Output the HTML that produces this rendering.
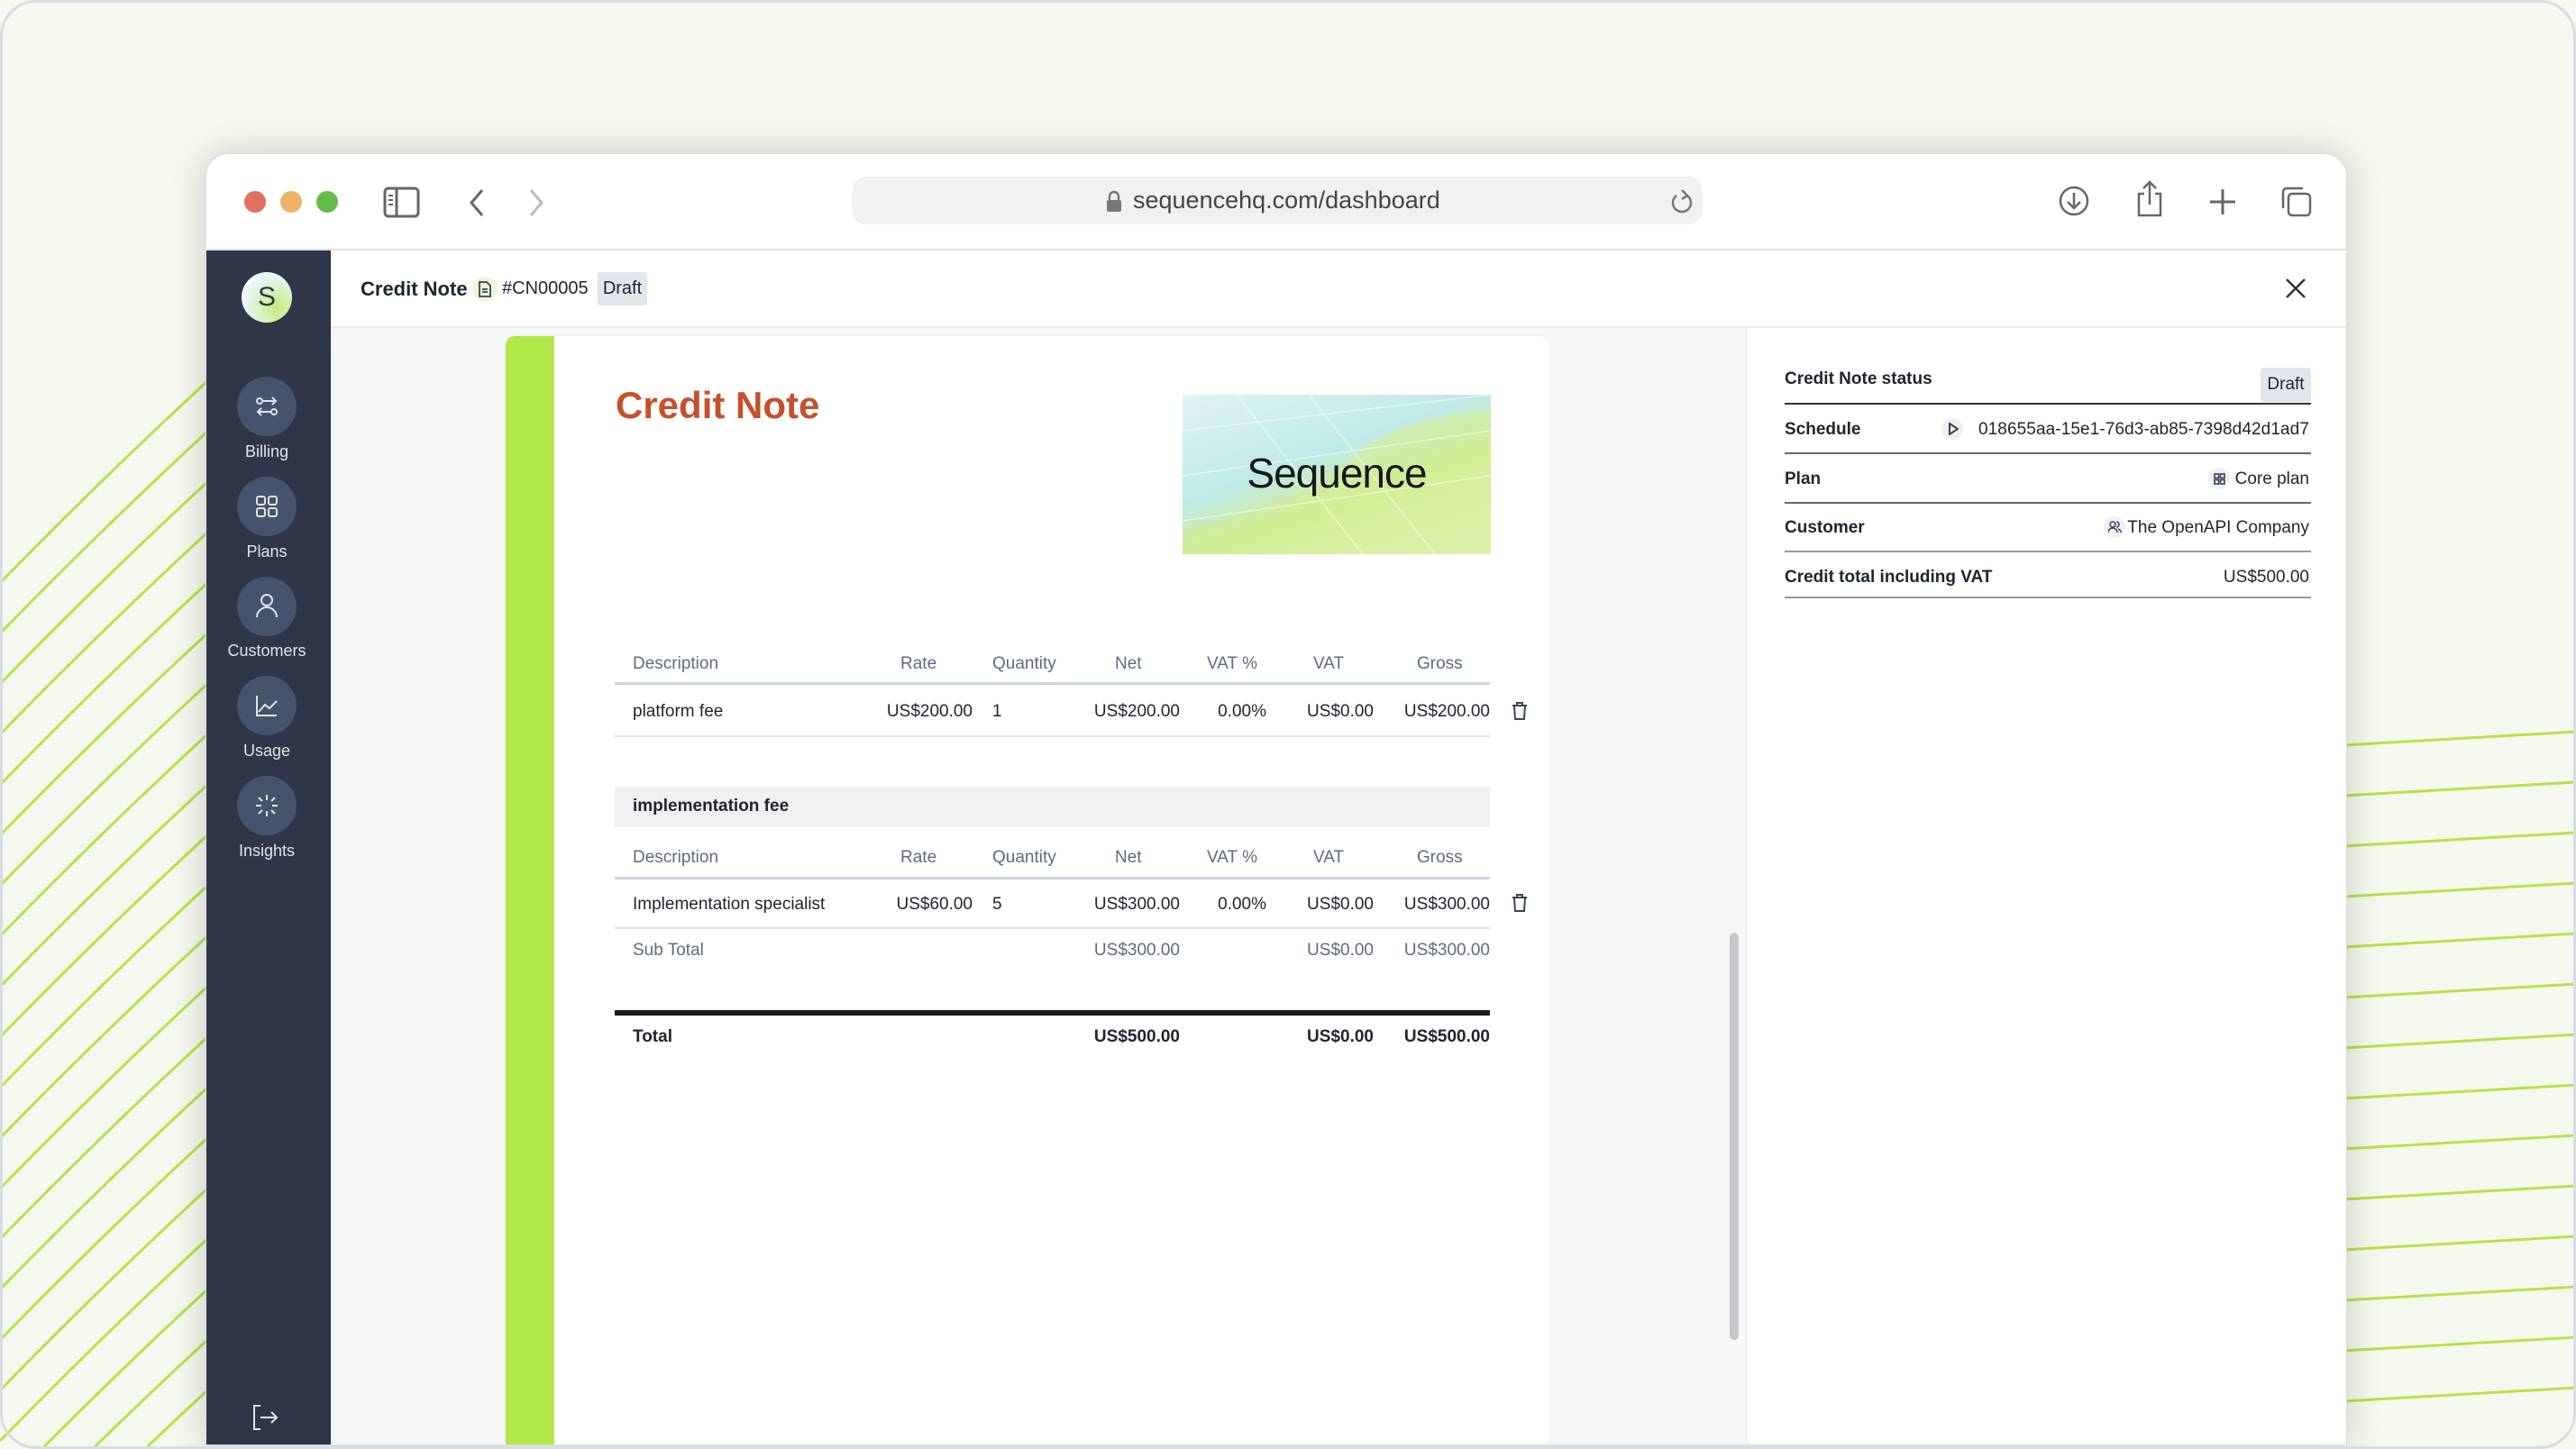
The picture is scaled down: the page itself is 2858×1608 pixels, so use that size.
<!DOCTYPE html>
<html><head><meta charset="utf-8"><style>
*{box-sizing:border-box;margin:0;padding:0}
html,body{width:2858px;height:1608px;overflow:hidden}
body{background:#f5f8ee;font-family:"Liberation Sans",sans-serif;position:relative;color:#1f2430}
.abs{position:absolute}
.frame{position:absolute;left:0;top:0;width:2858px;height:1608px;border:3px solid #d6dde4;border-radius:40px;pointer-events:none}
.win{position:absolute;left:228px;top:170px;width:2376px;height:1434px;background:#fff;border-radius:26px 26px 0 0;box-shadow:0 0 40px rgba(0,0,0,.18);overflow:hidden;border:1px solid #ddd}
.tb{position:absolute;left:0;top:0;width:100%;height:107px;background:#fff;border-bottom:2px solid #e2e2e2}
.dot{position:absolute;top:41px;width:24px;height:24px;border-radius:50%}
.side{position:absolute;left:0;top:107px;width:138px;height:1327px;background:#2e3748}
.nav{position:absolute;left:34px;width:66px;height:66px;border-radius:50%;background:#45536b}
.navl{position:absolute;left:-2px;width:138px;text-align:center;color:#dfe4ea;font-size:18px}
.hdr{position:absolute;left:138px;top:107px;right:0;height:86px;background:#fff;border-bottom:2px solid #e8ebef}
.main{position:absolute;left:138px;top:193px;width:1570px;height:1241px;background:#f5f7f9;overflow:hidden}
.card{position:absolute;left:194px;top:9px;width:1158px;height:1240px;background:#fff;border-radius:10px 10px 0 0;overflow:hidden;box-shadow:0 0 3px rgba(0,0,0,.06)}
.rp{position:absolute;left:1708px;top:193px;right:0;height:1241px;background:#fff;border-left:2px solid #eceff2}
.t{position:absolute;font-size:19px;white-space:nowrap}
.h{color:#5e6b82}
.r{text-align:right}
.rl{position:absolute;left:2px;font-size:19px;font-weight:bold;color:#1f2430}
.rline{position:absolute;left:2px;width:584px;height:2px;background:#555}
</style></head><body>
<svg class="abs" style="left:0;top:0" width="2858" height="1608">
<g fill="none" stroke="#b5e34a" stroke-width="3">
<path d="M0 647 Q114 530 230 423"/><path d="M0 703 Q114 586 230 479"/><path d="M0 759 Q114 642 230 535"/><path d="M0 815 Q114 698 230 591"/><path d="M0 871 Q114 754 230 647"/><path d="M0 927 Q114 810 230 703"/><path d="M0 983 Q114 866 230 759"/><path d="M0 1039 Q114 922 230 815"/><path d="M0 1095 Q114 978 230 871"/><path d="M0 1151 Q114 1034 230 927"/><path d="M0 1207 Q114 1090 230 983"/><path d="M0 1263 Q114 1146 230 1039"/><path d="M0 1319 Q114 1202 230 1095"/><path d="M0 1375 Q114 1258 230 1151"/><path d="M0 1431 Q114 1314 230 1207"/><path d="M0 1487 Q114 1370 230 1263"/><path d="M0 1543 Q114 1426 230 1319"/><path d="M0 1599 Q114 1482 230 1375"/><path d="M0 1655 Q114 1538 230 1431"/><path d="M0 1711 Q114 1594 230 1487"/><path d="M0 1767 Q114 1650 230 1543"/>
<path d="M2600 827 L2858 812"/><path d="M2600 883 L2858 868"/><path d="M2600 939 L2858 924"/><path d="M2600 995 L2858 980"/><path d="M2600 1051 L2858 1036"/><path d="M2600 1107 L2858 1092"/><path d="M2600 1163 L2858 1148"/><path d="M2600 1219 L2858 1204"/><path d="M2600 1275 L2858 1260"/><path d="M2600 1331 L2858 1316"/><path d="M2600 1387 L2858 1372"/><path d="M2600 1443 L2858 1428"/><path d="M2600 1499 L2858 1484"/><path d="M2600 1555 L2858 1540"/>
</g></svg>
<div class="win">
 <div class="tb">
  <div class="dot" style="left:42px;background:#e0705f"></div>
  <div class="dot" style="left:82px;background:#ecb267"></div>
  <div class="dot" style="left:122px;background:#66bb4c"></div>
  <svg class="abs" style="left:196px;top:36px" width="42" height="36"><rect x="2" y="2" width="37" height="31" rx="4" fill="none" stroke="#666" stroke-width="3"/><line x1="15" y1="2" x2="15" y2="33" stroke="#666" stroke-width="3"/><path d="M6 10h5M6 15h5M6 20h5" stroke="#666" stroke-width="2"/></svg>
  <svg class="abs" style="left:288px;top:36px" width="24" height="36"><path d="M18 4 L6 18 L18 32" fill="none" stroke="#666" stroke-width="3"/></svg>
  <svg class="abs" style="left:354px;top:36px" width="24" height="36"><path d="M6 4 L18 18 L6 32" fill="none" stroke="#bbb" stroke-width="3"/></svg>
  <div class="abs" style="left:716px;top:25px;width:944px;height:53px;background:#f1f1f1;border-radius:16px"></div>
  <svg class="abs" style="left:998px;top:40px" width="18" height="26"><path d="M4 11V7a5 5 0 0 1 10 0v4" fill="none" stroke="#777" stroke-width="2.5"/><rect x="1" y="11" width="16" height="13" rx="2" fill="#777"/></svg>
  <div class="abs" style="left:1028px;top:36px;font-size:27px;color:#444">sequencehq.com/dashboard</div>
  <svg class="abs" style="left:1623px;top:38px" width="28" height="30"><path d="M20 8 A10 10 0 1 1 8 8" fill="none" stroke="#777" stroke-width="2.5"/><path d="M14 2 L20 8 L14 12" fill="none" stroke="#777" stroke-width="2.5"/></svg>
  <svg class="abs" style="left:2054px;top:34px" width="36" height="36"><circle cx="18" cy="18" r="15" fill="none" stroke="#666" stroke-width="2.5"/><path d="M18 9v17M11 19l7 7 7-7" fill="none" stroke="#666" stroke-width="2.5"/></svg>
  <svg class="abs" style="left:2140px;top:28px" width="32" height="44"><path d="M10 16H4v24h24V16h-6M16 28V3M9 10l7-7 7 7" fill="none" stroke="#666" stroke-width="2.5"/></svg>
  <svg class="abs" style="left:2220px;top:36px" width="34" height="34"><path d="M17 3v28M3 17h28" stroke="#666" stroke-width="3"/></svg>
  <svg class="abs" style="left:2300px;top:34px" width="38" height="38"><rect x="10" y="10" width="24" height="24" rx="4" fill="none" stroke="#666" stroke-width="2.5"/><path d="M4 26V8a4 4 0 0 1 4-4h18" fill="none" stroke="#666" stroke-width="2.5"/></svg>
 </div>
 <div class="side">
  <div class="abs" style="left:39px;top:24px;width:56px;height:56px;border-radius:50%;background:radial-gradient(circle at 70% 70%,#c6ec7a,#e6f6f2 60%,#fff);text-align:center;line-height:56px;font-size:30px;color:#2e3748">S</div>
  <div class="nav" style="top:140px"></div>
  <svg class="abs" style="left:53px;top:159px" width="28" height="28"><circle cx="6" cy="8" r="3" fill="none" stroke="#dfe4ea" stroke-width="2"/><path d="M10 8h14M20 4l4 4-4 4" fill="none" stroke="#dfe4ea" stroke-width="2"/><circle cx="22" cy="20" r="3" fill="none" stroke="#dfe4ea" stroke-width="2"/><path d="M18 20H4M8 16l-4 4 4 4" fill="none" stroke="#dfe4ea" stroke-width="2"/></svg>
  <div class="navl" style="top:213px">Billing</div>
  <div class="nav" style="top:251px"></div>
  <svg class="abs" style="left:54px;top:271px" width="26" height="26" fill="none" stroke="#dfe4ea" stroke-width="2"><rect x="2" y="2" width="9" height="9" rx="2"/><rect x="15" y="2" width="9" height="9" rx="2"/><rect x="2" y="15" width="9" height="9" rx="2"/><rect x="15" y="15" width="9" height="9" rx="2"/></svg>
  <div class="navl" style="top:324px">Plans</div>
  <div class="nav" style="top:362px"></div>
  <svg class="abs" style="left:54px;top:380px" width="26" height="28" fill="none" stroke="#dfe4ea" stroke-width="2"><circle cx="13" cy="8" r="6"/><path d="M2 27a11 11 0 0 1 22 0"/></svg>
  <div class="navl" style="top:434px">Customers</div>
  <div class="nav" style="top:472px"></div>
  <svg class="abs" style="left:54px;top:492px" width="26" height="26" fill="none" stroke="#dfe4ea" stroke-width="2"><path d="M2 2v22h22M4 20l7-8 5 4 8-8"/></svg>
  <div class="navl" style="top:545px">Usage</div>
  <div class="nav" style="top:583px"></div>
  <svg class="abs" style="left:54px;top:603px" width="26" height="26" stroke="#dfe4ea" stroke-width="2"><path d="M13 1v6M13 19v6M1 13h6M19 13h6M4 4l4 4M18 18l4 4M22 4l-4 4M8 18l-4 4"/></svg>
  <div class="navl" style="top:656px">Insights</div>
  <svg class="abs" style="left:50px;top:1280px" width="32" height="30" fill="none" stroke="#dfe4ea" stroke-width="2"><path d="M10 2H3v26h7M10 15h18M22 9l6 6-6 6"/></svg>
 </div>
 <div class="hdr">
  <div class="abs" style="left:33px;top:30px;font-size:22px;font-weight:bold">Credit Note</div>
  <div class="abs" style="left:157px;top:29px;width:28px;height:28px;border-radius:50%;background:#eef6d8"></div>
  <svg class="abs" style="left:163px;top:34px" width="16" height="18" fill="none" stroke="#3b4456" stroke-width="1.8"><path d="M2 1h8l4 4v12H2z"/><path d="M5 9h6M5 12h6"/></svg>
  <div class="abs" style="left:190px;top:31px;font-size:20px">#CN00005</div>
  <div class="abs" style="left:296px;top:24px;width:55px;height:37px;background:#e3e7ec;border-radius:3px;font-size:20px;text-align:center;line-height:37px">Draft</div>
  <svg class="abs" style="left:2168px;top:30px" width="24" height="24"><path d="M2 2l20 20M22 2L2 22" stroke="#333" stroke-width="2.5"/></svg>
 </div>
 <div class="main">
  <div class="card">
   <div class="abs" style="left:0;top:0;width:54px;height:1240px;background:#b3e84a"></div>
   <div class="abs" style="left:122px;top:53px;font-size:42px;font-weight:bold;color:#c4512a">Credit Note</div>
   <div class="abs" style="left:751px;top:65px;width:342px;height:177px;background:linear-gradient(160deg,#e2f4f4 0%,#bfe9e8 40%,#cfee98 60%,#eaf6d0 100%);overflow:hidden">
    <svg class="abs" style="left:0;top:0" width="342" height="177"><path d="M0 150 Q150 120 200 60 Q260 20 342 20 L342 177 L0 177Z" fill="#d2ef95" opacity=".6"/><g fill="none" stroke="#fff" stroke-opacity=".5" stroke-width="1.5"><path d="M0 40 L342 0M0 90 L342 40M0 140 L342 90M60 0 L200 177M140 0 L280 177"/></g></svg>
    <div class="abs" style="left:0;width:342px;top:60px;text-align:center;font-size:46px;color:#15171c;letter-spacing:-1px">Sequence</div>
   </div>
  </div>
  <div class="abs" style="left:1552px;top:671px;width:10px;height:452px;border-radius:5px;background:#c5c8cc"></div>
 </div>
 <div class="rp"></div>
</div>
<div class="t h" style="left:702px;top:726px">Description</div>
<div class="t h" style="left:999px;top:726px">Rate</div>
<div class="t h" style="left:1101px;top:726px">Quantity</div>
<div class="t h" style="left:1237px;top:726px">Net</div>
<div class="t h" style="left:1339px;top:726px">VAT %</div>
<div class="t h" style="left:1457px;top:726px">VAT</div>
<div class="t h" style="left:1572px;top:726px">Gross</div>
<div class="abs" style="left:682px;top:757px;width:971px;height:3px;background:#cdd4dd"></div>
<div class="t" style="left:702px;top:779px">platform fee</div>
<div class="t r" style="right:1779px;top:779px">US$200.00</div>
<div class="t" style="left:1101px;top:779px">1</div>
<div class="t r" style="right:1549px;top:779px">US$200.00</div>
<div class="t r" style="right:1453px;top:779px">0.00%</div>
<div class="t r" style="right:1334px;top:779px">US$0.00</div>
<div class="t r" style="right:1205px;top:779px">US$200.00</div>
<svg class="abs" style="left:1677px;top:779px" width="18" height="20" fill="none" stroke="#3b4456" stroke-width="2"><path d="M1 4h16M6 4V1h6v3M3 4l1 15h10l1-15"/></svg>
<div class="abs" style="left:682px;top:816px;width:971px;height:2px;background:#dde2e8"></div>
<div class="abs" style="left:682px;top:873px;width:971px;height:45px;background:#eef0f2"></div>
<div class="t" style="left:702px;top:884px;font-weight:bold">implementation fee</div>
<div class="t h" style="left:702px;top:941px">Description</div>
<div class="t h" style="left:999px;top:941px">Rate</div>
<div class="t h" style="left:1101px;top:941px">Quantity</div>
<div class="t h" style="left:1237px;top:941px">Net</div>
<div class="t h" style="left:1339px;top:941px">VAT %</div>
<div class="t h" style="left:1457px;top:941px">VAT</div>
<div class="t h" style="left:1572px;top:941px">Gross</div>
<div class="abs" style="left:682px;top:973px;width:971px;height:3px;background:#cdd4dd"></div>
<div class="t" style="left:702px;top:993px">Implementation specialist</div>
<div class="t r" style="right:1779px;top:993px">US$60.00</div>
<div class="t" style="left:1101px;top:993px">5</div>
<div class="t r" style="right:1549px;top:993px">US$300.00</div>
<div class="t r" style="right:1453px;top:993px">0.00%</div>
<div class="t r" style="right:1334px;top:993px">US$0.00</div>
<div class="t r" style="right:1205px;top:993px">US$300.00</div>
<svg class="abs" style="left:1677px;top:992px" width="18" height="20" fill="none" stroke="#3b4456" stroke-width="2"><path d="M1 4h16M6 4V1h6v3M3 4l1 15h10l1-15"/></svg>
<div class="abs" style="left:682px;top:1029px;width:971px;height:2px;background:#dde2e8"></div>
<div class="t h" style="left:702px;top:1044px">Sub Total</div>
<div class="t r h" style="right:1549px;top:1044px">US$300.00</div>
<div class="t r h" style="right:1334px;top:1044px">US$0.00</div>
<div class="t r h" style="right:1205px;top:1044px">US$300.00</div>
<div class="abs" style="left:682px;top:1121px;width:971px;height:6px;background:#1a1c20"></div>
<div class="t" style="left:702px;top:1140px;font-weight:bold">Total</div>
<div class="t r" style="right:1549px;top:1140px;font-weight:bold">US$500.00</div>
<div class="t r" style="right:1334px;top:1140px;font-weight:bold">US$0.00</div>
<div class="t r" style="right:1205px;top:1140px;font-weight:bold">US$500.00</div>
<div class="abs" style="left:1978px;top:400px;width:586px;height:270px">
 <div class="rl" style="top:10px">Credit Note status</div>
 <div class="abs" style="right:0;top:8px;width:56px;height:38px;background:#e3e7ec;border-radius:3px;font-size:19px;text-align:center;line-height:38px">Draft</div>
 <div class="rline" style="top:47px;background:#333"></div>
 <div class="rl" style="top:66px">Schedule</div>
 <div class="abs" style="left:176px;top:64px;width:24px;height:24px;border-radius:50%;background:#eef0f3"></div>
 <svg class="abs" style="left:183px;top:69px" width="12" height="14"><path d="M2 1l9 6-9 6z" fill="none" stroke="#3b4456" stroke-width="2"/></svg>
 <div class="abs" style="right:2px;top:66px;font-size:19px;letter-spacing:0.1px">018655aa-15e1-76d3-ab85-7398d42d1ad7</div>
 <div class="rline" style="top:102px;background:#666"></div>
 <div class="rl" style="top:121px">Plan</div>
 <div class="abs" style="left:472px;top:119px;width:24px;height:24px;border-radius:50%;background:#eef0f3"></div>
 <svg class="abs" style="left:478px;top:125px" width="13" height="13" fill="none" stroke="#3b4456" stroke-width="1.6"><rect x="1" y="1" width="4.5" height="4.5"/><rect x="7.5" y="1" width="4.5" height="4.5"/><rect x="1" y="7.5" width="4.5" height="4.5"/><rect x="7.5" y="7.5" width="4.5" height="4.5"/></svg>
 <div class="abs" style="right:2px;top:121px;font-size:19px">Core plan</div>
 <div class="rline" style="top:157px;background:#666"></div>
 <div class="rl" style="top:175px">Customer</div>
 <div class="abs" style="left:356px;top:173px;width:24px;height:24px;border-radius:50%;background:#eef0f3"></div>
 <svg class="abs" style="left:361px;top:178px" width="15" height="14" fill="none" stroke="#3b4456" stroke-width="1.5"><circle cx="5" cy="4" r="3"/><path d="M0 13a5 5 0 0 1 10 0M9 1a3 3 0 0 1 0 6M11 9a4 4 0 0 1 3 4"/></svg>
 <div class="abs" style="right:2px;top:175px;font-size:19px">The OpenAPI Company</div>
 <div class="rline" style="top:211px;background:#999"></div>
 <div class="rl" style="top:230px">Credit total including VAT</div>
 <div class="abs" style="right:2px;top:230px;font-size:19px">US$500.00</div>
 <div class="rline" style="top:262px;background:#999"></div>
</div>
<div class="frame"></div>
</body></html>
